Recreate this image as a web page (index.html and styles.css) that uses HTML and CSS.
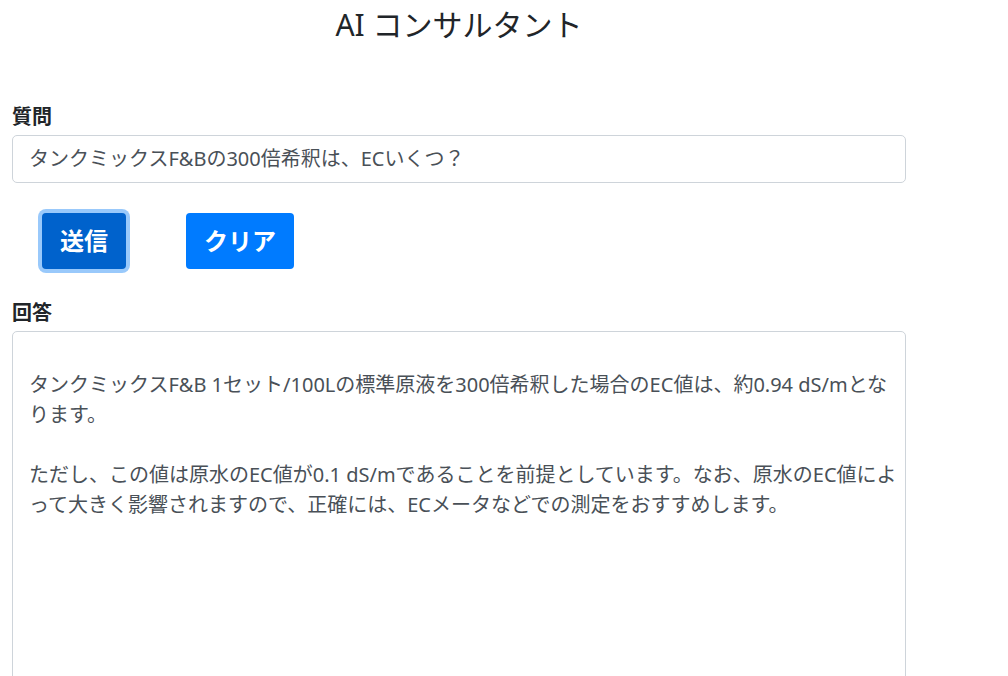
FILE: index.html
```html
<!DOCTYPE html>
<html lang="ja">

<head>
  <meta charset="UTF-8">
  <meta name="viewport" content="width=device-width, initial-scale=1.0">
  <title>AI コンサルタント</title>
  <link rel="stylesheet" href="styles.css">
</head>

<body>
  <form class="container">
    <h3 class="title">AI コンサルタント</h3>

    <div class="field">
      <label for="question" class="label">質問</label>
      <input type="text" id="question" class="control" value="タンクミックスF&amp;Bの300倍希釈は、ECいくつ？">
    </div>

    <div class="btn-row">
      <button type="submit" class="btn btn-focus">送信</button>
      <button type="button" class="btn">クリア</button>
    </div>

    <div class="field">
      <label for="answer" class="label">回答</label>
      <textarea id="answer" class="control answer" readonly>

タンクミックスF&amp;B 1セット/100Lの標準原液を300倍希釈した場合のEC値は、約0.94 dS/mとなります。

ただし、この値は原水のEC値が0.1 dS/mであることを前提としています。なお、原水のEC値によって大きく影響されますので、正確には、ECメータなどでの測定をおすすめします。</textarea>
    </div>
  </form>
</body>

</html>
```

FILE: styles.css
```css
html,
body {
  margin: 0;
  overflow: hidden;
  background-color: #fff;
  color: #212529;
  font-family: "Noto Sans", "Noto Sans CJK JP", sans-serif;
}

.container {
  width: 894px;
  margin-left: 12px;
  display: flex;
  flex-direction: column;
}

.title {
  margin: 9px 0 61px;
  font-size: 30px;
  font-weight: 400;
  line-height: 32px;
  text-align: center;
}

.field {
  display: flex;
  flex-direction: column;
}

.label {
  margin-bottom: 3px;
  font-size: 20px;
  font-weight: 700;
  line-height: 30px;
}

.control {
  box-sizing: border-box;
  width: 100%;
  padding: 8px 16px;
  font-family: inherit;
  font-size: 20px;
  line-height: 30px;
  color: #495057;
  background-color: #fff;
  border: 1px solid #ced4da;
  border-radius: 5px;
}

.control:focus {
  outline: none;
}

.answer {
  height: 380px;
  padding-right: 6px;
  resize: none;
}

.btn-row {
  display: flex;
  gap: 60px;
  padding: 30px 30px 29px;
}

.btn {
  padding: 10px 18px;
  font-family: inherit;
  font-size: 24px;
  font-weight: 700;
  line-height: 36px;
  color: #fff;
  background-color: #007bff;
  border: none;
  border-radius: 4px;
  cursor: pointer;
}

.btn-focus {
  background-color: #0062cc;
  box-shadow: 0 0 0 4px #99c9fb;
}
```
